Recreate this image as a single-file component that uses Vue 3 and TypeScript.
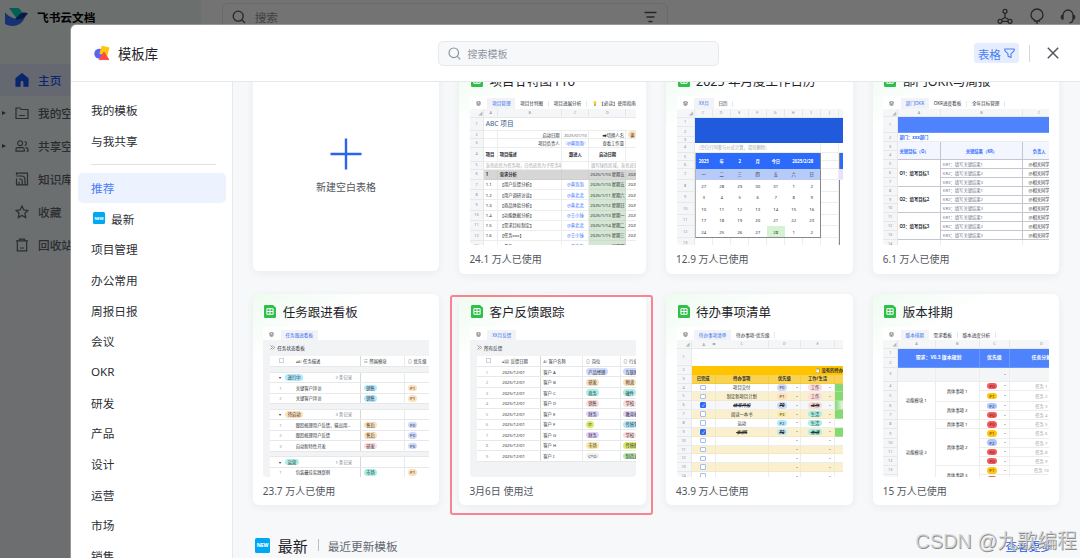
<script setup lang="ts">
interface Cell {
  r: number
  c: number
  t?: string
  k?: string
  rs?: number
  cs?: number
  pill?: string
  box?: 'off' | 'on'
}
interface Sheet {
  kind: 'sheet'
  cols: number[]
  rows: number[]
  letters: string[]
  cells: Cell[]
}
interface BaseCell {
  t: string
  pill?: string
  icon?: string
}
interface BaseRow {
  type: 'head' | 'group' | 'row' | 'gap'
  n?: string
  cells?: BaseCell[]
  note?: string
}
interface Base {
  kind: 'base'
  title: string
  cols: number[]
  rows: BaseRow[]
  rowH: number
  left: number
}
interface Card {
  title: string
  used: string
  tabs: string[]
  view: Sheet | Base
}

const cell = (r: number, c: number, t = '', k = '', rs = 1, cs = 1): Cell => ({ r, c, t, k, rs, cs })
const pill = (r: number, c: number, t: string, color: string, k = ''): Cell => ({ r, c, t, k, pill: color })

const tasks = ['用户反馈分析', '用户调研访谈', '商品体验分析', '功能数据分析', '需求目标制定', '任务xxx', '任务xxx']
const owners = ['黄泡泡', '黄北北', '黄北北', '王小锤', '黄北北', '王小锤', '黄泡泡']
const days = ['五', '六', '日', '一', '二', '三', '四']
const gantt: Sheet = {
  kind: 'sheet',
  cols: [14.3, 14, 64, 27.3, 37, 40],
  rows: [8.7, 13.7, 8, 8.7, 13.7, 8, 10.3, 10.2, 10.2, 10.2, 10.2, 10.2, 10.2, 10.2],
  letters: ['A', 'B', 'C', 'D', ''],
  cells: [
    cell(1, 1, 'ABC 项目', 'left big', 1, 5),
    cell(2, 2, '启动日期', 'right'),
    cell(2, 3, '2025/01/10', 'mute'),
    cell(2, 4, '➡切换人名', 'right'),
    pill(2, 5, '黄', 'orange', 'left'),
    cell(3, 2, '项目负责人', 'right'),
    cell(3, 3, '@黄泡泡', 'link tag'),
    cell(3, 4, '查看工作量', 'right'),
    cell(4, 1, '项目', 'left bold'),
    cell(4, 2, '项目描述', 'left bold'),
    cell(4, 3, '跟进人', 'bold'),
    cell(4, 4, '启动日期', 'bold'),
    cell(5, 1, '灰色底色为任务项，白色底色为子任务项', 'left faint', 1, 2),
    cell(5, 4, '填写绿色区域，灰色底色自动计算', 'left faint', 1, 2),
    cell(6, 1, '1', 'left bold grey'),
    cell(6, 2, '需求分析', 'left bold grey'),
    cell(6, 3, '', 'grey'),
    cell(6, 4, '2025/1/10 星期五', 'grey'),
    cell(6, 5, '2025/1/15', 'grey left'),
    ...tasks.flatMap((t, i) => [
      cell(7 + i, 1, `1.${i + 1}`, 'left'),
      cell(7 + i, 2, `【${t}】`, 'left'),
      cell(7 + i, 3, `@${owners[i]}`, 'link'),
      cell(7 + i, 4, `2025/1/${10 + i} 星期${days[i]}`, 'sage'),
      cell(7 + i, 5, `2025/1/${11 + i}`, 'left'),
    ]),
  ],
}

const weeks = [
  [27, 28, 29, 30, 31, 1, 2],
  [3, 4, 5, 6, 7, 8, 9],
  [10, 11, 12, 13, 14, 15, 16],
  [17, 18, 19, 20, 21, 22, 23],
  [24, 25, 26, 27, 28, 1, 2],
]
const calendar: Sheet = {
  kind: 'sheet',
  cols: [18.2, 18, 18, 18, 18, 18, 18, 18, 18.5, 20],
  rows: [8.6, 9.7, 9.6, 6.3, 9.6, 8.6, 7.7, 11.3, 11.5, 11.5, 11.5, 11.5, 11.5, 11.5],
  letters: ['C', 'D', 'E', 'F', 'G', 'H', 'I', 'J', ''],
  cells: [
    cell(1, 1, '', 'royal', 3, 9),
    cell(4, 1, '（空白行列参与公式计算，请勿删除）', 'left faint', 1, 7),
    ...['2025', '年', '2', '月', '今日'].map((t, i) => cell(5, i + 1, t, 'azure bold', 2, 1)),
    cell(5, 6, '2025/2/28', 'azure bold', 2, 2),
    ...['一', '二', '三', '四', '五', '六', '日'].map((t, i) => cell(7, i + 1, t, 'sky')),
    ...weeks.flatMap((w, i) => w.map((d, j) => cell(8 + i, j + 1, String(d), i === 4 && j === 4 ? 'mint' : 'plain'))),
    cell(5, 9, '', 'azure frameleft', 2, 1),
    cell(7, 9, '', 'lilac'),
    cell(8, 9, '', 'frameleft', 6, 1),
    cell(5, 1, '', 'frame', 8, 7),
  ],
}

const okr: Sheet = {
  kind: 'sheet',
  cols: [14.7, 43.3, 81.4, 34],
  rows: [8.5, 16, 9, 9, 8.7, ...Array(10).fill(8.87)],
  letters: ['A', 'B', 'C'],
  cells: [
    cell(1, 1, '', 'blue', 1, 3),
    cell(2, 1, '部门：xxx部门', 'left link bold', 1, 3),
    cell(3, 1, '关键目标（O）', 'left link bold pale line', 2, 1),
    cell(3, 2, '关键结果（KR）', 'link bold pale line', 2, 1),
    cell(3, 3, '负责人', 'link bold pale line', 2, 1),
    ...[1, 2, 3].map((n) => cell(2 + n * 3, 1, `O${n}：填写目标${n}`, 'left bold line', 3, 1)),
    ...[0, 1, 2, 3, 4, 5, 6, 7, 8].flatMap((i) => [
      cell(5 + i, 2, `KR${(i % 3) + 1}：填写关键结果${(i % 3) + 1}`, 'left line slate'),
      cell(5 + i, 3, '@相关同学', 'line'),
    ]),
  ],
}

const todoRows: [string, string, string, string, string, boolean][] = [
  ['项目交付', 'P0', 'indigo', '工作', 'rose', false],
  ['制定新项目计划', 'P1', 'orange', '工作', 'rose', false],
  ['填写月报', 'P0', 'indigo', '工作', 'rose', true],
  ['阅读一本书', 'P3', 'yellow', '生活', 'teal', false],
  ['运动', 'P2', 'cyan', '生活', 'teal', false],
  ['事项6', 'P2', 'cyan', '生活', 'teal', true],
]
const tone = (i: number) => (i % 2 === 1 ? 'cream' : i === 2 ? 'mist' : '')
const todo: Sheet = {
  kind: 'sheet',
  cols: [15, 24.3, 52.7, 32.8, 33.3, 30],
  rows: [8.7, 17, 8.7, 9, ...Array(11).fill(8.86)],
  letters: ['A', 'C', 'D', 'E', ''],
  cells: [
    cell(0, 1, '◂▸', 'head edge'),
    cell(0, 1, 'A', 'head clear'),
    cell(1, 1, '', 'plain', 1, 5),
    cell(2, 1, '', 'amber', 1, 5),
    cell(2, 4, '📋 没有的待办', 'amber bold hang', 1, 2),
    ...['已完成', '待办事项', '优先级', '工作/生活', ''].map((t, i) => cell(3, i + 1, t, 'gold bold')),
    ...Array.from({ length: 11 }, (_, i) => {
      const d = todoRows[i]
      const base = tone(i)
      const gone = d && d[5] ? ' gone' : ''
      const list: Cell[] = [
        { r: 4 + i, c: 1, k: base, box: d && d[5] ? 'on' : 'off' },
        cell(4 + i, 2, d ? d[0] : '', base + gone),
        d ? pill(4 + i, 3, d[1], d[2], base + ' drop' + gone) : cell(4 + i, 3, '', base + ' drop'),
        d ? pill(4 + i, 4, d[3], d[4], base + ' drop' + gone) : cell(4 + i, 4, '', base + ' drop'),
        cell(4 + i, 5, '', d && i !== 4 ? (i === 2 ? 'leaf fade' : 'leaf') : base),
      ]
      return list
    }).flat(),
  ],
}

const levels = ['P0', 'P1', 'P2', 'P0', 'P0', 'P1', 'P2', 'P0', 'P0', 'P1', 'P0']
const levelColor: Record<string, string> = { P0: 'red', P1: 'sun', P2: 'periwinkle' }
const release: Sheet = {
  kind: 'sheet',
  cols: [15, 37.3, 44.3, 30, 64],
  rows: [8.4, 9.7, 9.3, 14, 9.7, 10.3, 9.6, 9, 9.3, 9.2, 9.2, 9.2, 9.2, 9.2, 9.2],
  letters: ['A', 'B', 'C', 'D'],
  cells: [
    cell(1, 1, '需求：V0.3 版本规划', 'blue bold large', 2, 2),
    cell(1, 3, '优先级', 'blue bold large', 2, 1),
    cell(1, 4, '任务分解', 'blue bold large', 2, 1),
    cell(3, 1, '', 'ash'),
    cell(3, 2, '', 'ash'),
    cell(3, 3, '', 'ash drop'),
    cell(3, 4, '', 'ash'),
    cell(4, 1, '功能模块 1', '', 4, 1),
    cell(8, 1, '功能模块 2', '', 7, 1),
    cell(4, 2, '具体事项 1', '', 2, 1),
    cell(6, 2, '具体事项 2', '', 2, 1),
    cell(8, 2, '具体事项 1'),
    cell(9, 2, '具体事项 2', '', 4, 1),
    cell(13, 2, '具体事项 3', '', 2, 1),
    ...levels.flatMap((l, i) => [
      pill(4 + i, 3, l, levelColor[l], 'drop'),
      cell(4 + i, 4, `任务 ${i + 1}`, 'faint'),
    ]),
  ],
}

const board: Base = {
  kind: 'base',
  title: '任务状态看板',
  cols: [91.3, 43.8, 40],
  rowH: 10.45,
  left: 7,
  rows: [
    { type: 'head', cells: [{ t: '任务描述', icon: 'A⁞' }, { t: '所属模块', icon: '☷' }, { t: '优先级', icon: '⊙' }] },
    { type: 'gap' },
    { type: 'group', note: '2 条记录', cells: [{ t: '进行中', pill: 'cyan' }] },
    { type: 'row', n: '1', cells: [{ t: '关键客户拜访' }, { t: '销售', pill: 'cyan' }, { t: 'P1', pill: 'orange' }] },
    { type: 'row', n: '2', cells: [{ t: '关键客户拜访' }, { t: '销售', pill: 'cyan' }, { t: 'P1', pill: 'orange' }] },
    { type: 'gap' },
    { type: 'group', note: '3 条记录', cells: [{ t: '待启动', pill: 'orange' }] },
    { type: 'row', n: '1', cells: [{ t: '跟踪梳理用户反馈，输出用…' }, { t: '售后', pill: 'orange' }, { t: 'P0', pill: 'indigo' }] },
    { type: 'row', n: '2', cells: [{ t: '跟踪梳理用户反馈' }, { t: '售后', pill: 'orange' }, { t: 'P0', pill: 'indigo' }] },
    { type: 'row', n: '3', cells: [{ t: '自动新特性开发' }, { t: '研发', pill: 'rose' }, { t: 'P0', pill: 'indigo' }] },
    { type: 'gap' },
    { type: 'group', note: '1 条记录', cells: [{ t: '运营', pill: 'teal' }] },
    { type: 'row', n: '1', cells: [{ t: '包装最佳实践案例' }, { t: '市场', pill: 'teal' }, { t: 'P1', pill: 'orange' }] },
  ],
}

const jobs: [string, string, string, string][] = [
  ['产品经理', 'indigo', '互联网', 'indigo'],
  ['研发', 'orange', '物流', 'orange'],
  ['商务', 'teal', '硬件', 'teal'],
  ['销售', 'rose', '学校', 'rose'],
  ['财务', 'violet', '教育机构', 'violet'],
  ['IT', 'lime', '传统零售', 'cyan'],
  ['财务', 'violet', '学校', 'rose'],
  ['市场', 'yellow', '传统能源', 'lime'],
  ['C*O', 'smoke', '制造业', 'green'],
]
const feedback: Base = {
  kind: 'base',
  title: '所有反馈',
  cols: [64, 42.7, 37.3, 40],
  rowH: 10.55,
  left: 6.8,
  rows: [
    {
      type: 'head',
      cells: [{ t: '反馈日期', icon: '🗓' }, { t: '客户名称', icon: 'A⁞' }, { t: '岗位', icon: '⊙' }, { t: '行业', icon: '⊙' }],
    },
    ...jobs.map((j, i): BaseRow => ({
      type: 'row',
      n: String(i + 1),
      cells: [{ t: '2025/12/01' }, { t: `客户 ${'ABCDEFGHI'[i]}` }, { t: j[0], pill: j[1] }, { t: j[2], pill: j[3] }],
    })),
  ],
}

const cards: Card[] = [
  { title: '项目甘特图 Pro', used: '24.1 万人已使用', tabs: ['项目管理', '项目甘特图', '项目进展分析', '💡 【必读】使用指南'], view: gantt },
  { title: '2025 年月度工作日历', used: '12.9 万人已使用', tabs: ['XX月', '日历'], view: calendar },
  { title: '部门OKR与周报', used: '6.1 万人已使用', tabs: ['部门OKR', 'OKR进度看板', '全年目标管理'], view: okr },
  { title: '任务跟进看板', used: '23.7 万人已使用', tabs: ['任务跟进看板'], view: board },
  { title: '客户反馈跟踪', used: '3月6日 使用过', tabs: ['XX月反馈'], view: feedback },
  { title: '待办事项清单', used: '43.9 万人已使用', tabs: ['待办事项清单', '待办事项-优先级'], view: todo },
  { title: '版本排期', used: '15 万人已使用', tabs: ['版本排期', '需求看板', '版本进度分析'], view: release },
]

const categories = ['项目管理', '办公常用', '周报日报', '会议', 'OKR', '研发', '产品', '设计', '运营', '市场', '销售']

const px = (list: number[]) => list.map((n) => n + 'px').join(' ')
const tracks = (s: Sheet) => ({ gridTemplateColumns: px(s.cols), gridTemplateRows: px(s.rows) })
const area = (c: Cell) => ({ gridArea: `${c.r + 1} / ${c.c + 1} / span ${c.rs ?? 1} / span ${c.cs ?? 1}` })
const grid = (s: Sheet): Cell[] =>
  s.rows.flatMap((_, r) =>
    s.cols.map((_, c) => {
      if (r === 0) return cell(r, c, c === 0 ? '◢' : s.letters[c - 1], c === 0 ? 'head corner' : 'head')
      return c === 0 ? cell(r, c, String(r), 'head') : cell(r, c)
    }),
  )
</script>

<template>
  <div class="page">
    <div class="app">
      <nav class="side">
        <div class="brand">
          <svg width="24" height="20" viewBox="0 0 24 20">
            <path d="M5 1h9.500c2.300 1.800 3.600 4 4.300 6.300L13 12z" fill="#00d6b9" />
            <path d="M1 5.500c4.500 4.400 9 6.800 14 6.800 3 0 5-1.200 6-2.300-2 5.500-6.500 9-12 9-4 0-7-1.300-8-2.500z" fill="#3370ff" />
            <path d="M24 6.500c-3-1.500-6-1.200-8.500 1-1.500 1.300-2.500 2.800-4.500 4.200 4 1.600 8 .8 10-1.700.9-1.100 1.800-2.500 3-3.500z" fill="#133c9a" />
          </svg>
          <b>飞书云文档</b>
        </div>
        <div class="nav on">
          <i class="caret"></i>
          <svg width="14" height="14" viewBox="0 0 14 14"><path d="M7 .8 13 5.500v7.700H9V9.500a2 2 0 0 0-4 0v3.700H1V5.500z" fill="#1456f0" stroke="#1456f0" stroke-linejoin="round" /></svg>
          <span>主页</span>
        </div>
        <div class="nav">
          <i class="caret show"></i>
          <svg width="14" height="14" viewBox="0 0 14 14"><path d="M1 2h4l1.200 1.500H13V12.500H1zM4 9.500h6" /></svg>
          <span>我的空间</span>
        </div>
        <div class="nav">
          <i class="caret show"></i>
          <svg width="15" height="14" viewBox="0 0 15 14"><circle cx="5.500" cy="4" r="2.600" /><path d="M1 12.500v-1.700q0-2 2-2h5q2 0 2 2v1.700zM10.300 2.300a2 2 0 0 1 0 4M11.500 8.800q2.500.2 2.500 2.300v1.400h-1.700" /></svg>
          <span>共享空间</span>
        </div>
        <div class="nav">
          <i class="caret"></i>
          <svg width="14" height="14" viewBox="0 0 14 14"><path d="M1.500 3V1.200h11v11.600h-11V6.500M1.500 4h5q3.500 0 3.500 3.500v5M4 7h1.500q1.700 0 1.700 1.700v4M4 9.800v3" /></svg>
          <span>知识库</span>
        </div>
        <div class="nav">
          <i class="caret"></i>
          <svg width="14" height="14" viewBox="0 0 14 14"><path d="m7 1 1.800 3.900 4.200.5-3.100 2.900.8 4.300L7 10.500l-3.700 2.100.8-4.300L1 5.400l4.200-.5z" /></svg>
          <span>收藏</span>
        </div>
        <div class="nav">
          <i class="caret"></i>
          <svg width="14" height="14" viewBox="0 0 14 14"><path d="M1 2.800h12M4.500 2.500V1.200h5v1.300M2.300 3v9.800h9.400V3M5 10h4" /></svg>
          <span>回收站</span>
        </div>
      </nav>
      <header class="top">
        <div class="topsearch">
          <svg width="14" height="14" viewBox="0 0 14 14"><circle cx="6.200" cy="6.200" r="5" /><path d="m10 10 3 3" /></svg>
          <span>搜索</span>
          <svg class="lines" width="13" height="12" viewBox="0 0 13 12"><path d="M.5 1.500h12M2.500 6h8M4.500 10.500h4" /></svg>
        </div>
        <div class="tools">
          <svg width="16" height="17" viewBox="0 0 16 17"><circle cx="8" cy="3.300" r="2" /><circle cx="3" cy="13.300" r="2" /><circle cx="13" cy="13.300" r="2" /><path d="M8 5.500v4M8 9.500l-3.500 2M8 9.500l3.500 2M5 13.300h6" /></svg>
          <svg width="16" height="17" viewBox="0 0 16 17"><path d="M5.500 13v-1.200C3.300 10.800 2 9.200 2 7a6 6 0 0 1 12 0c0 2.200-1.300 3.800-3.500 4.800V13zM8 13v3" /></svg>
          <svg width="16" height="17" viewBox="0 0 16 17"><path d="M3 11V7.500a5 5.500 0 0 1 10 0V11q0 3.500-3.500 3.800M2.800 7.200q-1.500.3-1.500 2t1.500 2zM13.200 7.200q1.500.3 1.500 2t-1.500 2z" /></svg>
        </div>
      </header>
    </div>
    <div class="mask"></div>

    <section class="modal">
      <header class="bar">
        <div class="title">
          <svg width="16" height="16" viewBox="0 0 16 16">
            <circle cx="5.300" cy="8.800" r="5" fill="#5b65f5" />
            <path d="m7.700.8 7 1.500q.8.200.6 1l-1.800 7q-.2.700-1 .5L6 9q-.7-.2-.5-1z" fill="#ffc60a" />
            <path d="m10 7 4.800 7.600H5.200z" fill="#ff4b45" stroke="#ff4b45" stroke-linejoin="round" />
          </svg>
          <span>模板库</span>
        </div>
        <div class="search">
          <svg width="13" height="13" viewBox="0 0 13 13"><circle cx="5.800" cy="5.800" r="4.800" /><path d="m9.300 9.300 3 3" /></svg>
          <span>搜索模板</span>
        </div>
        <div class="actions">
          <div class="filter">
            <span>表格</span>
            <svg width="11" height="11" viewBox="0 0 11 11"><path d="M.8 1h9.400v1.700L7 5.800v3.700L4 8.300V5.800L.8 2.700z" /></svg>
          </div>
          <i class="rule"></i>
          <svg class="close" width="12" height="12" viewBox="0 0 12 12"><path d="m.8.800 10.400 10.400M11.200.8.800 11.200" /></svg>
        </div>
      </header>
      <div class="body">
        <aside class="menu">
          <div class="item">我的模板</div>
          <div class="item">与我共享</div>
          <hr />
          <div class="item on">推荐</div>
          <div class="item"><i class="new">NEW</i>最新</div>
          <div v-for="c in categories" :key="c" class="item">{{ c }}</div>
        </aside>
        <main class="content">
          <div class="cards">
            <div class="card blank">
              <svg width="32" height="32" viewBox="0 0 32 32"><path d="M16 .5v31M.5 16h31" /></svg>
              <span>新建空白表格</span>
            </div>
            <article v-for="card in cards" :key="card.title" class="card">
              <h3>
                <svg width="12" height="13" viewBox="0 0 12 13">
                  <path d="M1.200 0H9l3 2.700v9.100q0 1.200-1.200 1.200H1.200Q0 13 0 11.800V1.200Q0 0 1.200 0z" fill="#2fbf4a" />
                  <path d="M2.900 3.700h6.200v5.600H2.900zM2.900 6.500h6.200M6 3.700v5.600" fill="none" stroke="#fff" />
                </svg>
                <span>{{ card.title }}</span>
              </h3>
              <div class="preview">
                <div class="tabs">
                  <svg width="5" height="5" viewBox="0 0 5 5"><path d="m2.500.3 2 1-2 1-2-1zM.5 2.500l2 1 2-1M.5 3.600l2 1 2-1" /></svg>
                  <span v-for="(t, i) in card.tabs" :key="t" :class="{ on: i === 0 }">{{ t }}</span>
                </div>
                <div v-if="card.view.kind === 'sheet'" class="sheet" :style="tracks(card.view)">
                  <div v-for="(c, i) in grid(card.view)" :key="'g' + i" class="cell" :class="c.k" :style="area(c)">{{ c.t }}</div>
                  <div v-for="(c, i) in card.view.cells" :key="'c' + i" class="cell" :class="c.k" :style="area(c)">
                    <i v-if="c.box" class="box" :class="c.box">{{ c.box === 'on' ? '✓' : '' }}</i>
                    <em v-else-if="c.pill" class="pill" :class="c.pill">{{ c.t }}</em>
                    <span v-else>{{ c.t }}</span>
                  </div>
                </div>
                <div v-else class="base">
                  <div class="basetitle">
                    <svg width="5" height="5" viewBox="0 0 5 5"><path d="m.5.5 2 2-2 2M2.700.5l2 2-2 2" /></svg>
                    <span>{{ card.view.title }}</span>
                  </div>
                  <div class="table" :style="{ marginLeft: card.view.left + 'px' }">
                    <div
                      v-for="(row, i) in card.view.rows"
                      :key="i"
                      class="brow"
                      :class="row.type"
                      :style="{ gridTemplateColumns: px(card.view.cols), height: row.type === 'gap' ? '5.800px' : card.view.rowH + 'px' }"
                    >
                      <template v-if="row.type !== 'gap'">
                        <div v-for="(col, j) in card.view.cols" :key="j" class="bcell" :class="{ first: j === 0 }">
                          <template v-if="j === 0">
                            <i class="lead"><b v-if="row.type === 'head'" class="tick"></b>{{ row.type === 'group' ? '▾' : row.n }}</i>
                          </template>
                          <span v-if="row.type === 'head'" class="hicon">{{ j === 0 ? '🔒︎' : '' }}{{ row.cells?.[j]?.icon }}</span>
                          <em v-if="row.cells?.[j]?.pill" class="pill" :class="row.cells[j].pill">{{ row.cells[j].t }}</em>
                          <span v-else>{{ row.cells?.[j]?.t }}</span>
                          <small v-if="row.note && j === 0">{{ row.note }}</small>
                        </div>
                      </template>
                    </div>
                  </div>
                </div>
              </div>
              <footer>{{ card.used }}</footer>
            </article>
          </div>
          <div class="section">
            <i class="new large">NEW</i>
            <h2>最新</h2>
            <i class="rule"></i>
            <span>最近更新模板</span>
            <a>查看更多</a>
          </div>
        </main>
      </div>
    </section>
    <div class="highlight"></div>
    <div class="watermark">CSDN @九歌编程</div>
  </div>
</template>

<style>
body {
  overflow: hidden;
}
</style>

<style scoped>
* {
  box-sizing: border-box;
}
i,
em {
  font-style: normal;
}
svg {
  flex: none;
  display: block;
}
.page {
  position: relative;
  width: 1080px;
  height: 558px;
  overflow: hidden;
  font-family: "Noto Sans", "Noto Sans CJK SC", sans-serif;
  font-size: 11.67px;
  color: #1f2329;
  white-space: nowrap;
}
.app {
  display: flex;
  height: 558px;
  background: #fff;
}
.side {
  width: 201px;
  background: linear-gradient(160deg, #eef6f4, #f1f4f6 60%);
}
.brand {
  display: flex;
  align-items: center;
  gap: 9px;
  height: 34px;
  margin-bottom: 30px;
  padding: 0 0 1px 4px;
  color: #000;
}
.nav {
  display: flex;
  align-items: center;
  height: 32px;
  margin-bottom: 1.100px;
  padding-bottom: 1px;
  color: #5d636b;
  font-weight: 500;
}
.nav svg {
  width: 14px;
  margin-right: 9px;
  fill: none;
  stroke: #5d636b;
  stroke-width: 1.200;
}
.nav.on {
  background: #dfe7fb;
  color: #1456f0;
}
.caret {
  width: 0;
  margin: 0 9px 0 2px;
  border: 2.500px solid transparent;
  border-left: 4px solid transparent;
  border-right: 0;
}
.caret.show {
  border-left-color: #51565d;
}
.top {
  flex: 1;
  display: flex;
  justify-content: space-between;
  padding: 3px 4px 0 20.700px;
}
.topsearch {
  display: flex;
  align-items: center;
  width: 446px;
  height: 28px;
  padding: 0 10px 1px 9px;
  border: 1px solid #e9eaec;
  border-radius: 6px;
  color: #8f959e;
}
.topsearch svg,
.tools svg {
  fill: none;
  stroke: #51565d;
  stroke-width: 1.300;
}
.topsearch span {
  margin-left: 9px;
}
.topsearch .lines {
  margin-left: auto;
}
.tools {
  display: flex;
  gap: 15.500px;
  padding-top: 5px;
}
.mask {
  position: absolute;
  inset: 0;
  background: rgba(0, 0, 0, 0.55);
}
.modal {
  position: absolute;
  left: 71px;
  top: 25px;
  width: 1009px;
  height: 533px;
  display: flex;
  flex-direction: column;
  border-radius: 5px 0 0 0;
  background: #fff;
  overflow: hidden;
  box-shadow: 0 0 0 1px rgba(190, 190, 190, 0.5);
}
.bar {
  flex: none;
  display: grid;
  grid-template-columns: 367px 281px 1fr;
  align-items: center;
  height: 57px;
  border-bottom: 1px solid #e6e8eb;
}
.title {
  display: flex;
  align-items: center;
  gap: 8px;
  padding-left: 23px;
  font-size: 13.330px;
}
.search {
  display: flex;
  align-items: center;
  gap: 7px;
  height: 25px;
  padding-left: 8.500px;
  border: 1px solid #e6e8eb;
  border-radius: 5px;
  background: #f7f8fa;
  color: #8f959e;
  font-size: 10px;
}
.search svg {
  fill: none;
  stroke: #8f959e;
  stroke-width: 1.200;
}
.actions {
  display: flex;
  align-items: center;
  justify-content: flex-end;
  padding-right: 21px;
}
.filter {
  display: flex;
  align-items: center;
  gap: 3px;
  height: 20px;
  padding: 0 4px 0 3.500px;
  border-radius: 3px;
  background: #e6edff;
  color: #4a7df6;
}
.filter svg {
  fill: none;
  stroke: #4a7df6;
  stroke-width: 1.100;
  stroke-linejoin: round;
}
.rule {
  width: 1px;
  height: 17px;
  margin: 0 17px 0 10px;
  background: #d5d7da;
}
.close {
  fill: none;
  stroke: #51565d;
  stroke-width: 1.500;
}
.body {
  flex: 1;
  display: flex;
  min-height: 0;
}
.menu {
  flex: none;
  width: 162px;
  padding: 13.500px 6px 0 7px;
  border-right: 1px solid #e6e8eb;
  overflow: hidden;
}
.item {
  display: flex;
  align-items: center;
  height: 29.670px;
  margin-bottom: 1px;
  padding: 0 0 1px 13px;
  border-radius: 5px;
  color: #2b2f36;
}
.item.on {
  background: #edf2ff;
  color: #4a7df6;
}
.menu hr {
  height: 1px;
  margin: 8px 10px 8.500px 13px;
  border: 0;
  background: #dee0e3;
}
.new {
  display: flex;
  align-items: center;
  justify-content: center;
  width: 12px;
  height: 12px;
  margin: 0 6px 0 2px;
  border-radius: 1.500px;
  background: #00a8f3;
  color: #fff;
  font-size: 3.800px;
  font-weight: 800;
}
.new.large {
  width: 15px;
  height: 15px;
  margin: 0 7.500px 0 2.500px;
  font-size: 5px;
}
.content {
  flex: 1;
  min-width: 0;
  padding: 0 20px 0 19.700px;
  background: #f7f8fa;
  overflow: hidden;
}
.cards {
  display: grid;
  grid-template-columns: repeat(4, 186.700px);
  gap: 20px;
  margin-top: -19.700px;
}
.card {
  height: 211.300px;
  border-radius: 6px;
  background: linear-gradient(150deg, #eefbf0 0, #fff 22%);
  box-shadow: 0 2px 9px rgba(31, 35, 41, 0.06);
  overflow: hidden;
}
.blank {
  display: flex;
  flex-direction: column;
  align-items: center;
  height: 208.500px;
  padding-top: 76px;
  gap: 9px;
  background: #fff;
  color: #51565d;
  font-size: 10px;
}
.blank svg {
  stroke: #2a63ec;
  stroke-width: 2.400;
}
.card h3 {
  display: flex;
  align-items: center;
  gap: 6.500px;
  height: 33.600px;
  margin: 0;
  padding: 3px 0 0 11.500px;
  font-size: 12.500px;
  font-weight: 400;
}
.card footer {
  display: flex;
  align-items: center;
  height: 27px;
  padding-left: 10px;
  color: #51565d;
  font-size: 10px;
}
.preview {
  width: 166px;
  height: 149.300px;
  margin-left: 10.500px;
  border-radius: 4px;
  background: #fff;
  overflow: hidden;
  color: #2d3035;
  font-size: 4.300px;
  line-height: 1;
}
.tabs {
  display: flex;
  align-items: center;
  height: 13px;
  padding: 2.500px 0 0 6px;
}
.tabs svg {
  margin-right: 6.500px;
  fill: none;
  stroke: #444;
  stroke-width: 0.600;
}
.tabs span {
  display: flex;
  align-items: center;
  height: 6px;
  padding: 0 4.800px;
  border-right: 1px solid #e6e8ea;
  font-size: 4.600px;
}
.tabs .on {
  height: 10.500px;
  border: 0;
  background: #f2f3f6;
  color: #336df4;
}
.sheet {
  display: grid;
}
.cell {
  position: relative;
  display: flex;
  align-items: center;
  justify-content: center;
  min-width: 0;
  min-height: 0;
  border-right: 1px solid #eceded;
  border-bottom: 1px solid #eceded;
  background: #fff;
  overflow: hidden;
}
.cell.head {
  background: #f5f6f7;
  border-color: #e6e8ea;
  color: #8a8e94;
  font-size: 3.800px;
}
.cell.corner {
  justify-content: flex-end;
  padding: 2px 1px 0 0;
  color: #b5b8bc;
}
.cell.edge {
  justify-content: flex-end;
  border-right: 0;
}
.cell.clear {
  background: none;
  border: 0;
}
.cell.left {
  justify-content: flex-start;
  padding-left: 1.500px;
}
.cell.right {
  justify-content: flex-end;
  padding-right: 1.500px;
}
.bold {
  font-weight: 700;
}
.cell.big {
  color: #376092;
  font-size: 6.700px;
}
.cell.large {
  font-size: 4.900px;
}
.cell.mute {
  color: #666a70;
}
.cell.faint {
  color: #a2a5aa;
}
.cell.slate {
  color: #74798c;
}
.cell.link {
  color: #3370ff;
}
.cell.tag span {
  padding: 0 2px;
  background: #edf2ff;
}
.cell.grey {
  background: #d6d6d6;
  border-color: #cfcfcf;
}
.cell.sage {
  background: #d6e6d5;
  border-color: #cbdccb;
}
.cell.royal {
  background: #1f5bdc;
  border: 0;
}
.cell.azure {
  background: #2b6afa;
  border: 0;
  color: #fff;
}
.cell.sky {
  background: #b7cbfa;
  border: 0;
}
.cell.plain {
  border: 0;
}
.cell.mint {
  background: #d5f2d2;
  border: 0;
}
.cell.lilac {
  background: #ecdffc;
}
.cell.frame {
  border: 1px solid #85888c;
  border-top: 0;
  border-left-color: #b0b3b8;
  background: none;
}
.cell.frameleft {
  border-left: 1px solid #85888c;
}
.cell.blue {
  background: #4e83fd;
  border-color: #6b98fd;
  color: #fff;
}
.cell.pale {
  background: #f3f6ff;
}
.cell.line {
  border-color: #c3c6ce;
}
.cell.amber {
  background: #ffc400;
  border: 0;
}
.cell.gold {
  background: #f9d252;
  border-color: #f3c93e;
}
.cell.hang {
  justify-content: flex-start;
  padding-left: 14px;
}
.cell.cream {
  background: #faf0ce;
  border-color: #f2e8c6;
}
.cell.mist {
  background: #f5f7fb;
}
.cell.ash {
  background: #f4f5f6;
}
.cell.leaf {
  background: #84d973;
  border-color: #a4e298;
}
.cell.fade {
  background: linear-gradient(90deg, #84d973, #def4da 25%);
}
.gone {
  font-style: italic;
  font-weight: 700;
  text-decoration: line-through;
}
.cell.drop {
  padding-right: 5px;
}
.cell.drop::after {
  content: "";
  position: absolute;
  right: 2.500px;
  border: 1.300px solid transparent;
  border-top: 1.500px solid #85888c;
  border-bottom: 0;
}
.box {
  display: flex;
  align-items: center;
  justify-content: center;
  width: 5.500px;
  height: 5.500px;
  border: 1px solid #a5bdf2;
  border-radius: 1px;
  background: #fff;
}
.box.on {
  border-color: #2b6afa;
  background: #2b6afa;
  color: #fff;
  font-size: 4.500px;
}
.pill {
  display: inline-flex;
  align-items: center;
  height: 6.600px;
  padding: 0 2.300px;
  border-radius: 4px;
  font-style: inherit;
}
.cyan {
  background: #b1e8fc;
}
.orange {
  background: #fddfb8;
}
.indigo {
  background: #cdd9fb;
}
.rose {
  background: #fcdcdc;
}
.teal {
  background: #a9efe6;
}
.violet {
  background: #dfd2fb;
}
.lime {
  background: #dbe96a;
}
.yellow {
  background: #fbeaa2;
}
.green {
  background: #b5ecab;
}
.smoke {
  background: #eff0f1;
}
.red {
  background: #f8595a;
}
.sun {
  background: #ffc60a;
}
.periwinkle {
  background: #adc6fc;
}
.base {
  height: 136.300px;
  background: #f2f3f5;
}
.basetitle {
  display: flex;
  align-items: center;
  gap: 2px;
  height: 15.500px;
  padding-left: 7px;
  font-size: 4.600px;
}
.basetitle svg {
  fill: none;
  stroke: #74787e;
  stroke-width: 0.700;
}
.brow {
  display: grid;
  background: #fff;
  border-bottom: 1px solid #e7e8ea;
}
.brow.gap {
  background: none;
}
.brow.head {
  min-height: 11.200px;
}
.bcell {
  display: flex;
  align-items: center;
  min-width: 0;
  padding-left: 2.500px;
  border-right: 1px solid #e9ebed;
}
.bcell.first {
  padding-left: 0;
  border-color: #d6d8da;
}
.lead {
  width: 25.500px;
  padding-left: 9px;
  color: #9a9da3;
}
.group .lead {
  width: 15.300px;
  color: #333;
}
.tick {
  display: block;
  width: 5px;
  height: 5px;
  border: 1px solid #cfd2d6;
}
.hicon {
  margin-right: 1.500px;
  color: #74787e;
}
.bcell small {
  margin-left: auto;
  margin-right: 8.500px;
  color: #85888c;
  font-size: 4.300px;
}
.section {
  display: flex;
  align-items: center;
  height: 24px;
  margin-top: 28.300px;
  color: #646a73;
}
.section h2 {
  margin: 0;
  color: #1f2329;
  font-size: 15px;
  font-weight: 400;
}
.section .rule {
  height: 12px;
  margin: 0 9px 0 10px;
  background: #bbbfc4;
}
.section a {
  margin-left: auto;
  margin-right: 8px;
  color: #245bdb;
}
.highlight {
  position: absolute;
  left: 450px;
  top: 295px;
  width: 203px;
  height: 220px;
  border: 2px solid #f98391;
  border-radius: 3px;
}
.watermark {
  position: absolute;
  right: 3px;
  bottom: 3px;
  color: rgba(216, 216, 216, 0.8);
  font-family: "Liberation Sans", "Noto Sans CJK SC", sans-serif;
  font-size: 19.900px;
  line-height: 28px;
  text-shadow: 0.700px 0.700px 0.500px #8c8c8c;
}
</style>
